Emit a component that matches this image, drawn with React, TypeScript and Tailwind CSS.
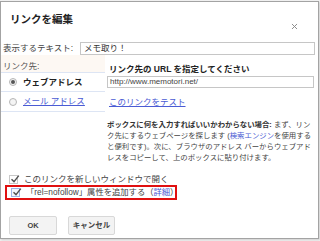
import { X } from 'lucide-react'

const jp = "font-['Liberation_Sans','Noto_Sans_CJK_JP',sans-serif]"

function Check({ focused = false }: { focused?: boolean }) {
  return (
    <span
      className={`relative flex h-[9px] w-[9px] shrink-0 items-center justify-center border ${
        focused ? 'border-[#9fb3e6] bg-[#f3f6fd]' : 'border-[#c8c8c8] bg-white'
      }`}
    >
      <svg className="absolute -top-[2px] left-[0px] h-[10px] w-[10px]" viewBox="0 0 10 10" fill="none">
        <path d="M1.5 5.2 L4 7.6 L8.8 1.6" stroke="#505050" strokeWidth="1.4" />
      </svg>
    </span>
  )
}

function Radio({ checked }: { checked: boolean }) {
  return (
    <span className="flex h-[8px] w-[8px] items-center justify-center rounded-full border border-[#b5b5b5] bg-[#f4f4f4]">
      {checked && <span className="h-[4px] w-[4px] rounded-full bg-[#555]" />}
    </span>
  )
}

export default function App() {
  return (
    <div className={`h-[241px] w-[320px] overflow-hidden bg-[#f2f2f2] ${jp}`}>
      <div className="mt-[1px] flex h-[238px] w-[319px] flex-col border border-[#a3a3a3] bg-white shadow-[1px_1px_2px_rgba(0,0,0,0.15)]">
        {/* header */}
        <div className="flex h-[39px] shrink-0 items-start justify-between">
          <div className="pl-[9px] pt-[10px] text-[10.5px] font-bold leading-[14px] text-[#222]">リンクを編集</div>
          <X className="mr-[19px] mt-[20px] h-[9px] w-[9px] text-[#888]" strokeWidth={2.5} />
        </div>

        {/* display text */}
        <div className="flex h-[14px] shrink-0 items-center pl-[2px] pr-[3px]">
          <span className="w-[77px] text-[8.5px] leading-[14px] text-[#444]">表示するテキスト:</span>
          <div className="flex h-[13px] flex-1 items-center border border-[#c6c6c6] pl-[3px] text-[8.5px] text-[#333]">
            メモ取り！
          </div>
        </div>

        {/* link target */}
        <div className="flex h-[110px] shrink-0">
          <div className="w-[104px]">
            <div className="h-[17px] bg-[#fdf8f3] pl-[2px] pt-[6px] text-[8.5px] leading-[11px] text-[#555]">リンク先:</div>
            <div className="flex h-[20px] items-center gap-[6px] border-t border-b border-[#dde5f4] pl-[8px] text-[8.5px] font-bold text-[#222]">
              <Radio checked />
              ウェブアドレス
            </div>
            <div className="flex h-[20px] items-center gap-[6px] border-b border-[#dde5f4] pl-[8px] text-[8.5px] text-[#4a5bd4]">
              <Radio checked={false} />
              <span className="underline">メール アドレス</span>
            </div>
          </div>
          <div className="ml-[2px] w-[207px]">
            <div className="pl-[2px] pt-[9px] text-[8.5px] font-bold leading-[11px] text-[#222]">
              リンク先の URL を指定してください
            </div>
            <div className="mt-[1px] flex h-[12px] items-center border border-[#c6c6c6] pl-[2px] text-[8px] text-[#444]">
              http://www.memotori.net/
            </div>
            <div className="mt-[9px] pl-[2px] text-[8.5px] leading-[11px] text-[#4a5bd4] underline">このリンクをテスト</div>
            <p className="mt-[11px] whitespace-nowrap text-[7.4px] leading-[11px] text-[#444]">
              <span className="font-bold text-[#333]">ボックスに何を入力すればいいかわからない場合:</span> まず、リン
              <br />
              ク先にするウェブページを探します (<span className="text-[#4a5bd4]">検索エンジン</span>を使用する
              <br />
              と便利です)。次に、ブラウザのアドレス バーからウェブアド
              <br />
              レスをコピーして、上のボックスに貼り付けます。
            </p>
          </div>
        </div>

        {/* options */}
        <div className="mt-[8px] flex h-[12px] shrink-0 items-center gap-[6px] pl-[8px] text-[8.5px] text-[#444]">
          <Check />
          このリンクを新しいウィンドウで開く
        </div>
        <div className="ml-[4px] flex h-[15px] w-[172px] shrink-0 items-center gap-[6px] border-2 border-[#e01010] pl-[4px] text-[8.3px] text-[#444]">
          <Check focused />
          <span className="whitespace-nowrap">
            「rel=nofollow」属性を追加する（<span className="text-[#4a5bd4]">詳細</span>）
          </span>
        </div>

        {/* buttons */}
        <div className="mt-[16px] flex shrink-0 gap-[11px] pl-[8px]">
          <button className="flex h-[19px] w-[48px] items-center justify-center rounded-[2px] border border-[#d8d8d8] bg-[#f3f3f3] text-[7.5px] font-bold text-[#444]">
            OK
          </button>
          <button className="flex h-[19px] w-[47px] items-center justify-center rounded-[2px] border border-[#d8d8d8] bg-[#f3f3f3] text-[7.5px] font-bold text-[#444]">
            キャンセル
          </button>
        </div>
      </div>
    </div>
  )
}
